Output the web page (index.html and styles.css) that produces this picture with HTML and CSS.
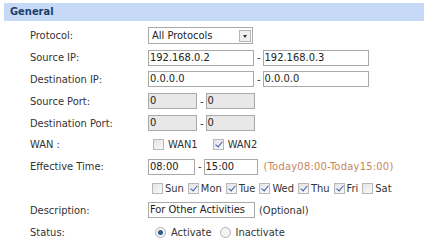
FILE: index.html
```html
<!DOCTYPE html>
<html>
<head>
	<meta charset="UTF-8">
	<title>General</title>
	<link rel="stylesheet" href="styles.css">
</head>
<body>
	<div class="panel">
		<div class="head">General</div>
		<div class="form">
			<div class="row">
				<label>Protocol:</label>
				<div class="field">
					<span class="select">All Protocols<i class="arrow"></i></span>
				</div>
			</div>
			<div class="row">
				<label>Source IP:</label>
				<div class="field">
					<span class="input w-ip">192.168.0.2</span><span class="dash">-</span><span class="input w-ip">192.168.0.3</span>
				</div>
			</div>
			<div class="row">
				<label>Destination IP:</label>
				<div class="field">
					<span class="input w-ip">0.0.0.0</span><span class="dash">-</span><span class="input w-ip">0.0.0.0</span>
				</div>
			</div>
			<div class="row">
				<label>Source Port:</label>
				<div class="field">
					<span class="input w-port off">0</span><span class="dash">-</span><span class="input w-port off">0</span>
				</div>
			</div>
			<div class="row">
				<label>Destination Port:</label>
				<div class="field">
					<span class="input w-port off">0</span><span class="dash">-</span><span class="input w-port off">0</span>
				</div>
			</div>
			<div class="row">
				<label>WAN :</label>
				<div class="field wan">
					<span class="check"></span><span class="opt">WAN1</span>
					<span class="check on"></span><span class="opt">WAN2</span>
				</div>
			</div>
			<div class="row">
				<label>Effective Time:</label>
				<div class="field">
					<span class="input w-t1">08:00</span><span class="dash">-</span><span class="input w-t2">15:00</span>
					<span class="note">(Today08:00-Today15:00)</span>
				</div>
			</div>
			<div class="row">
				<label></label>
				<div class="field days">
					<span class="check"></span><span class="day">Sun</span>
					<span class="check on"></span><span class="day">Mon</span>
					<span class="check on"></span><span class="day">Tue</span>
					<span class="check on"></span><span class="day">Wed</span>
					<span class="check on"></span><span class="day">Thu</span>
					<span class="check on"></span><span class="day">Fri</span>
					<span class="check"></span><span class="day">Sat</span>
				</div>
			</div>
			<div class="row">
				<label>Description:</label>
				<div class="field">
					<span class="input w-desc">For Other Activities</span><span class="hint">(Optional)</span>
				</div>
			</div>
			<div class="row">
				<label>Status:</label>
				<div class="field status">
					<span class="radio on"></span><span class="opt">Activate</span>
					<span class="radio"></span><span class="opt">Inactivate</span>
				</div>
			</div>
		</div>
	</div>
</body>
</html>
```
FILE: styles.css
```css
*{margin: 0;padding: 0;box-sizing: border-box;}
body{background: #FFFFFF;font-family: "DejaVu Sans Condensed", "DejaVu Sans", sans-serif;font-size: 11px;color: #333333;}
.panel{padding-top: 3px;}
.head{margin-left: 4px;height: 18px;line-height: 18px;background: #C6DAF8;color: #1E3F6E;font-weight: bold;padding-left: 6px;}
.form{padding-top: 4px;}
.row{display: flex;align-items: center;height: 21.8px;}
.row label{width: 148px;padding-left: 30px;flex-shrink: 0;}
.field{display: flex;align-items: center;}

.input{display: block;height: 16px;line-height: 14px;border: 1px solid #A9A9A9;padding-left: 1px;background: #FFFFFF;color: #222222;white-space: nowrap;overflow: hidden;}
.input.off{background: #E8E8E8;}
.w-ip{width: 106px;}
.w-port{width: 49px;}
.w-t1{width: 47px;}
.w-t2{width: 54px;}
.w-desc{width: 107px;}
.dash{padding: 0 2px 0 3px;}

.select{display: flex;align-items: center;justify-content: space-between;width: 105px;height: 17px;border: 1px solid #A9A9A9;padding: 0 1px 0 3px;color: #222222;}
.select .arrow{display: block;width: 12px;height: 12px;border: 1px solid #B5B5B5;background: #EFEFEF;position: relative;}
.select .arrow:after{content: "";position: absolute;left: 3px;top: 4px;border-left: 2.5px solid transparent;border-right: 2.5px solid transparent;border-top: 3px solid #333333;}

.note{color: #C8845C;margin-left: 6px;letter-spacing: 0.25px;}
.hint{margin-left: 4px;}

.check{display: block;width: 11px;height: 11px;border: 1px solid #B8B8B8;background: linear-gradient(135deg, #E4E4E4, #FAFAFA);position: relative;}
.check.on:after{content: "";position: absolute;left: 3px;top: 0px;width: 3px;height: 6px;border-right: 1.5px solid #3D5AB5;border-bottom: 1.5px solid #3D5AB5;transform: rotate(40deg);}
.wan{padding-left: 5px;}
.wan .opt{margin-left: 4px;margin-right: 15px;}
.days{padding-left: 4px;}
.days .day{margin-left: 2px;margin-right: 4px;}

.radio{display: block;width: 11px;height: 11px;border-radius: 50%;border: 1px solid #B0B0B0;background: #F4F4F4;position: relative;}
.radio.on:after{content: "";position: absolute;left: 2px;top: 2px;width: 5px;height: 5px;border-radius: 50%;background: #2F5C8A;}
.status{padding-left: 7px;}
.status .opt{margin-left: 5px;margin-right: 8px;}
```
